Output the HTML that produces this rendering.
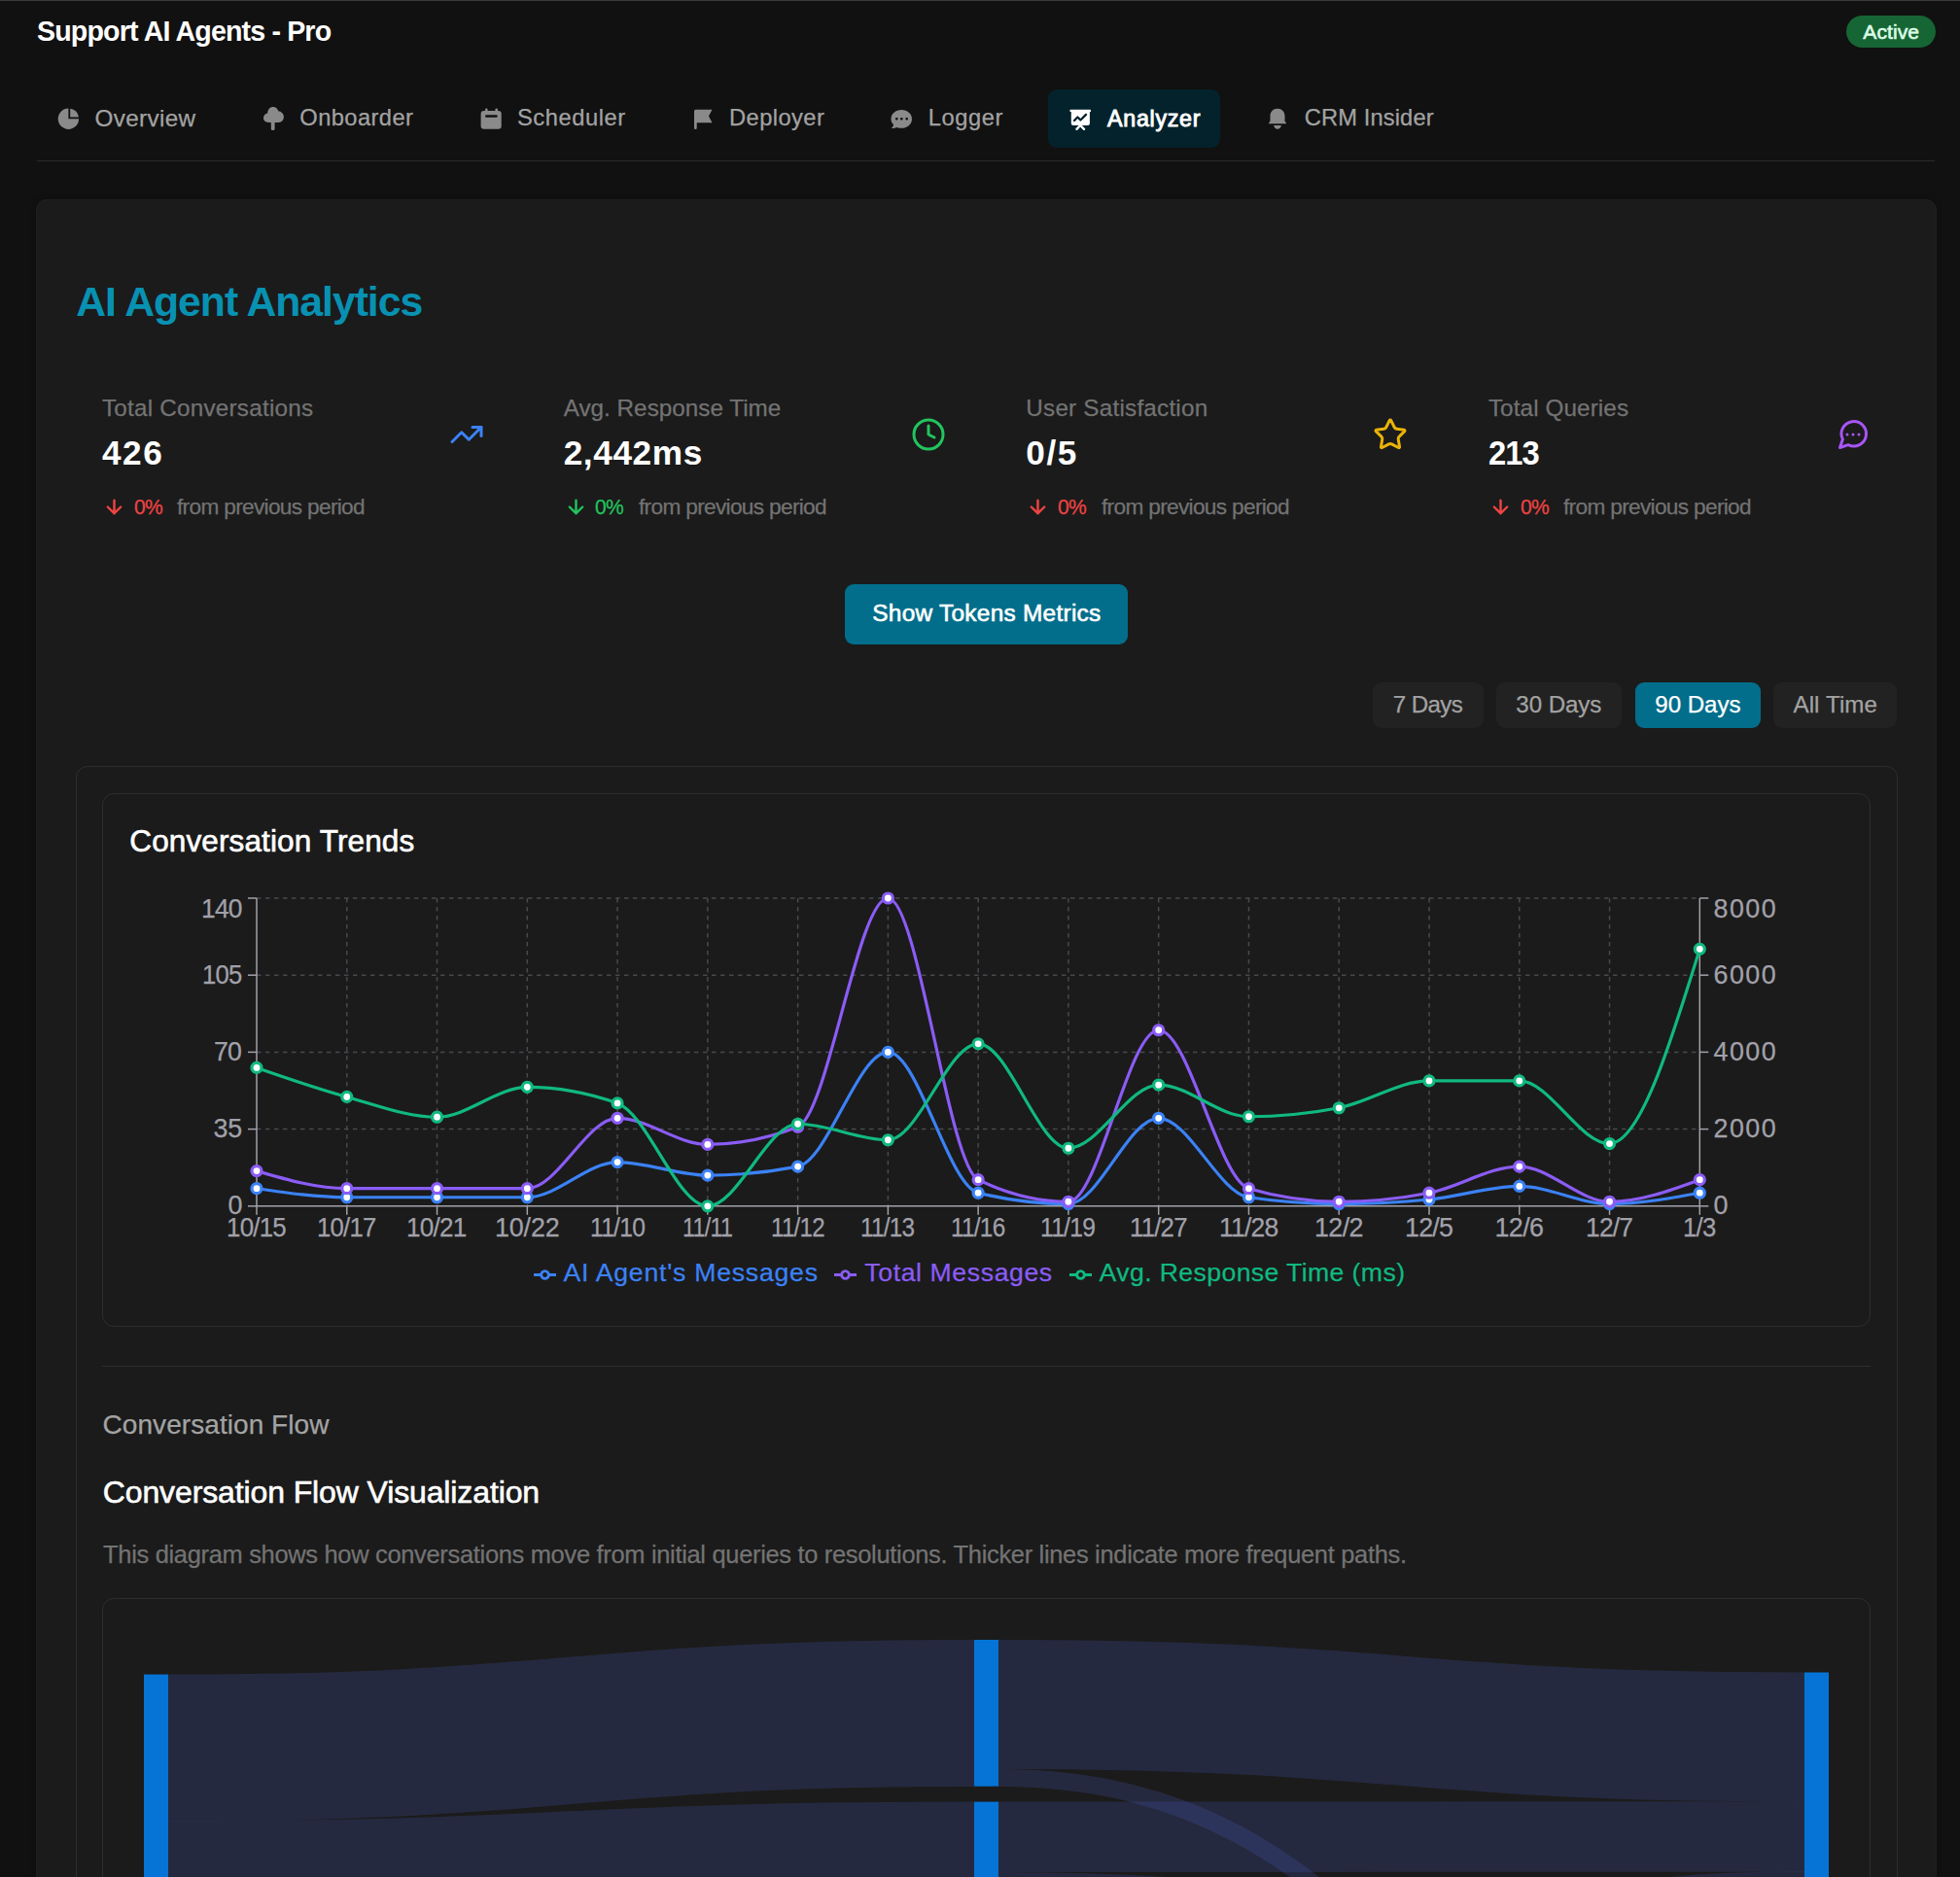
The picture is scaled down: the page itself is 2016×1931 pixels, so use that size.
<!DOCTYPE html>
<html><head><meta charset="utf-8"><style>
html,body{margin:0;padding:0;}
body{width:2016px;height:1931px;overflow:hidden;background:#111111;position:relative;font-family:"Liberation Sans", sans-serif;}
.t{position:absolute;white-space:nowrap;font-family:"Liberation Sans", sans-serif;}
svg{overflow:visible}
</style></head><body>
<div style="position:absolute;left:0.00px;top:0.00px;width:2016.00px;height:1.20px;background:#3a3a3a"></div>
<div class="t" style="left:38.00px;top:17.83px;font-size:28.78px;line-height:28.78px;letter-spacing:-0.863px;font-weight:bold;color:#ffffff;transform:scaleX(0.9942);transform-origin:0.00px 0;">Support AI Agents - Pro</div>
<div style="position:absolute;left:1899.00px;top:16.00px;width:92.00px;height:32.70px;background:#166534;border-radius:20px"></div>
<div class="t" style="left:1916.30px;top:21.96px;font-size:21.08px;line-height:21.08px;letter-spacing:0.060px;font-weight:normal;-webkit-text-stroke:0.6px #dcfce7;color:#dcfce7;">Active</div>
<div class="t" style="left:97.50px;top:109.85px;font-size:24.27px;line-height:24.27px;letter-spacing:0.339px;font-weight:normal;-webkit-text-stroke:0.25px #a3a3a3;color:#a3a3a3;">Overview</div>
<div class="t" style="left:308.30px;top:110.34px;font-size:23.69px;line-height:23.69px;letter-spacing:0.425px;font-weight:normal;-webkit-text-stroke:0.25px #a3a3a3;color:#a3a3a3;">Onboarder</div>
<div class="t" style="left:532.00px;top:110.34px;font-size:23.69px;line-height:23.69px;letter-spacing:0.562px;font-weight:normal;-webkit-text-stroke:0.25px #a3a3a3;color:#a3a3a3;">Scheduler</div>
<div class="t" style="left:750.00px;top:110.34px;font-size:23.69px;line-height:23.69px;letter-spacing:0.429px;font-weight:normal;-webkit-text-stroke:0.25px #a3a3a3;color:#a3a3a3;">Deployer</div>
<div class="t" style="left:954.70px;top:110.34px;font-size:23.69px;line-height:23.69px;letter-spacing:0.580px;font-weight:normal;-webkit-text-stroke:0.25px #a3a3a3;color:#a3a3a3;">Logger</div>
<div class="t" style="left:1341.70px;top:110.34px;font-size:23.69px;line-height:23.69px;letter-spacing:0.130px;font-weight:normal;-webkit-text-stroke:0.25px #a3a3a3;color:#a3a3a3;">CRM Insider</div>
<div style="position:absolute;left:1078.00px;top:91.80px;width:176.70px;height:60.00px;background:#04222c;border-radius:9px"></div>
<div class="t" style="left:1139.05px;top:110.51px;font-size:23.26px;line-height:23.26px;letter-spacing:0.714px;font-weight:normal;-webkit-text-stroke:0.9px #ffffff;color:#ffffff;">Analyzer</div>
<div style="position:absolute;left:38.00px;top:164.50px;width:1952.00px;height:1.50px;background:#2b2b2b"></div>
<svg style="position:absolute;left:58.00px;top:110.00px;" width="26.00" height="26.00" viewBox="0 0 26 26"><path d="M12.4 1.5 A10.7 10.7 0 1 0 23.1 12.2 L12.4 12.2 Z" fill="#8a8a8a"/><path d="M14.2 1.7 A10.7 10.7 0 0 1 23 10.4 L14.2 10.4 Z" fill="#8a8a8a"/></svg>
<svg style="position:absolute;left:268.00px;top:108.00px;" width="26.00" height="28.00" viewBox="0 0 26 28"><path d="M8.6 18 C4.5 18 3 15.6 3 13.3 C3 10.7 5 8.8 7.2 8.6 C7.3 4.7 9.7 2 12.9 2 C15.7 2 17.6 3.9 18.2 6.3 C21.3 6.6 23.9 9 23.9 12.3 C23.9 15.6 21.6 18 18.6 18 Z" fill="#8a8a8a"/><rect x="10.8" y="17" width="3.8" height="9" rx="1.5" fill="#8a8a8a"/></svg>
<svg style="position:absolute;left:492.00px;top:109.00px;" width="26.00" height="26.00" viewBox="0 0 26 26"><rect x="2.6" y="5" width="21.1" height="18.8" rx="3" fill="#8a8a8a"/><rect x="7" y="2.6" width="2.6" height="4" rx="1.2" fill="#8a8a8a"/><rect x="17.4" y="2.6" width="2.6" height="4" rx="1.2" fill="#8a8a8a"/><rect x="7" y="9.3" width="12.7" height="2.4" rx="1.2" fill="#111"/></svg>
<svg style="position:absolute;left:712.00px;top:110.00px;" width="24.00" height="25.00" viewBox="0 0 24 25"><path d="M2 4.5 C2 3.4 2.9 2.8 4 2.8 L20.5 2.8 L17 9.6 L20.5 16.2 L4.7 16.2 L4.7 21.8 C4.7 22.6 4.1 23 3.4 23 C2.6 23 2 22.6 2 21.8 Z" fill="#8a8a8a"/></svg>
<svg style="position:absolute;left:914.00px;top:110.00px;" width="26.00" height="25.00" viewBox="0 0 26 25"><path d="M13.2 3 C19.1 3 24 6.9 24 12.4 C24 17.8 19.1 21.8 13.2 21.8 C11.4 21.8 9.9 21.5 8.5 20.9 C6.6 21.9 4.7 22.1 2.8 21.9 C4 20.8 4.9 19.6 5.1 18.2 C3.4 16.7 2.5 14.6 2.5 12.4 C2.5 6.9 7.3 3 13.2 3 Z" fill="#8a8a8a"/><rect x="7" y="11" width="2.6" height="2.6" rx="1" fill="#111"/><rect x="12" y="11" width="2.6" height="2.6" rx="1" fill="#111"/><rect x="17.4" y="11" width="2.6" height="2.6" rx="1" fill="#111"/></svg>
<svg style="position:absolute;left:1098.00px;top:110.00px;" width="26.00" height="26.00" viewBox="0 0 26 26"><rect x="2.5" y="2.8" width="21.5" height="2.2" rx="0.6" fill="#fff"/><path d="M3.8 4.5 H22.9 V17 C22.9 18.1 22 19 20.9 19 H5.8 C4.7 19 3.8 18.1 3.8 17 Z" fill="#fff"/><path d="M7 14 L10.4 10.5 L13.4 13.5 L19 7.9" stroke="#04222c" stroke-width="2.3" fill="none" stroke-linecap="round" stroke-linejoin="round"/><path d="M9.5 22.8 L13.2 19 L17 22.8" stroke="#fff" stroke-width="2.4" fill="none" stroke-linecap="round"/></svg>
<svg style="position:absolute;left:1302.00px;top:109.00px;" width="24.00" height="26.00" viewBox="0 0 24 26"><path d="M12 2.7 C16.5 2.7 19.5 6 19.5 10.3 L19.5 15.4 L21.3 18.3 L2.7 18.3 L4.5 15.4 L4.5 10.3 C4.5 6 7.5 2.7 12 2.7 Z" fill="#8a8a8a"/><path d="M8.2 20 H15.9 C15.6 22.3 14 23.8 12 23.8 C10 23.8 8.5 22.3 8.2 20 Z" fill="#8a8a8a"/></svg>
<div style="position:absolute;left:38.00px;top:206.30px;width:1953.00px;height:1753.70px;background:#1b1b1b;border-radius:10px;box-shadow:0 0 0 1px #1f1f1f, 0 0 6px rgba(0,0,0,0.35)"></div>
<div class="t" style="left:78.20px;top:289.22px;font-size:42.73px;line-height:42.73px;letter-spacing:-1.012px;font-weight:bold;color:#0891b2;">AI Agent Analytics</div>
<div class="t" style="left:104.90px;top:408.15px;font-size:24.27px;line-height:24.27px;letter-spacing:0.228px;font-weight:normal;-webkit-text-stroke:0.25px #737373;color:#737373;">Total Conversations</div>
<div class="t" style="left:104.90px;top:448.02px;font-size:35.18px;line-height:35.18px;letter-spacing:1.638px;font-weight:bold;color:#ffffff;">426</div>
<div class="t" style="left:137.60px;top:510.54px;font-size:21.80px;line-height:21.80px;letter-spacing:-0.654px;font-weight:normal;-webkit-text-stroke:0.25px #ef4444;color:#ef4444;transform:scaleX(0.9635);transform-origin:0.00px 0;">0%</div>
<div class="t" style="left:182.40px;top:510.36px;font-size:22.97px;line-height:22.97px;letter-spacing:-0.689px;font-weight:normal;-webkit-text-stroke:0.25px #737373;color:#737373;transform:scaleX(0.9866);transform-origin:0.00px 0;">from previous period</div>
<svg style="position:absolute;left:105.90px;top:510.00px;" width="23.00" height="23.00" viewBox="0 0 24 24"><path d="M12 5v14M19 12l-7 7-7-7" stroke="#ef4444" stroke-width="2.5" fill="none" stroke-linecap="round" stroke-linejoin="round"/></svg>
<div class="t" style="left:579.70px;top:408.15px;font-size:24.27px;line-height:24.27px;letter-spacing:0.009px;font-weight:normal;-webkit-text-stroke:0.25px #737373;color:#737373;">Avg. Response Time</div>
<div class="t" style="left:579.70px;top:448.02px;font-size:35.18px;line-height:35.18px;letter-spacing:0.612px;font-weight:bold;color:#ffffff;">2,442ms</div>
<div class="t" style="left:612.40px;top:510.54px;font-size:21.80px;line-height:21.80px;letter-spacing:-0.654px;font-weight:normal;-webkit-text-stroke:0.25px #22c55e;color:#22c55e;transform:scaleX(0.9635);transform-origin:0.00px 0;">0%</div>
<div class="t" style="left:657.20px;top:510.36px;font-size:22.97px;line-height:22.97px;letter-spacing:-0.689px;font-weight:normal;-webkit-text-stroke:0.25px #737373;color:#737373;transform:scaleX(0.9866);transform-origin:0.00px 0;">from previous period</div>
<svg style="position:absolute;left:580.70px;top:510.00px;" width="23.00" height="23.00" viewBox="0 0 24 24"><path d="M12 5v14M19 12l-7 7-7-7" stroke="#22c55e" stroke-width="2.5" fill="none" stroke-linecap="round" stroke-linejoin="round"/></svg>
<div class="t" style="left:1055.30px;top:408.15px;font-size:24.27px;line-height:24.27px;letter-spacing:0.216px;font-weight:normal;-webkit-text-stroke:0.25px #737373;color:#737373;">User Satisfaction</div>
<div class="t" style="left:1055.30px;top:448.02px;font-size:35.18px;line-height:35.18px;letter-spacing:1.613px;font-weight:bold;color:#ffffff;">0/5</div>
<div class="t" style="left:1088.00px;top:510.54px;font-size:21.80px;line-height:21.80px;letter-spacing:-0.654px;font-weight:normal;-webkit-text-stroke:0.25px #ef4444;color:#ef4444;transform:scaleX(0.9635);transform-origin:0.00px 0;">0%</div>
<div class="t" style="left:1132.80px;top:510.36px;font-size:22.97px;line-height:22.97px;letter-spacing:-0.689px;font-weight:normal;-webkit-text-stroke:0.25px #737373;color:#737373;transform:scaleX(0.9866);transform-origin:0.00px 0;">from previous period</div>
<svg style="position:absolute;left:1056.30px;top:510.00px;" width="23.00" height="23.00" viewBox="0 0 24 24"><path d="M12 5v14M19 12l-7 7-7-7" stroke="#ef4444" stroke-width="2.5" fill="none" stroke-linecap="round" stroke-linejoin="round"/></svg>
<div class="t" style="left:1530.90px;top:408.15px;font-size:24.27px;line-height:24.27px;letter-spacing:0.102px;font-weight:normal;-webkit-text-stroke:0.25px #737373;color:#737373;">Total Queries</div>
<div class="t" style="left:1530.90px;top:448.02px;font-size:35.18px;line-height:35.18px;letter-spacing:-1.055px;font-weight:bold;color:#ffffff;transform:scaleX(0.9307);transform-origin:0.00px 0;">213</div>
<div class="t" style="left:1563.60px;top:510.54px;font-size:21.80px;line-height:21.80px;letter-spacing:-0.654px;font-weight:normal;-webkit-text-stroke:0.25px #ef4444;color:#ef4444;transform:scaleX(0.9635);transform-origin:0.00px 0;">0%</div>
<div class="t" style="left:1608.40px;top:510.36px;font-size:22.97px;line-height:22.97px;letter-spacing:-0.689px;font-weight:normal;-webkit-text-stroke:0.25px #737373;color:#737373;transform:scaleX(0.9866);transform-origin:0.00px 0;">from previous period</div>
<svg style="position:absolute;left:1531.90px;top:510.00px;" width="23.00" height="23.00" viewBox="0 0 24 24"><path d="M12 5v14M19 12l-7 7-7-7" stroke="#ef4444" stroke-width="2.5" fill="none" stroke-linecap="round" stroke-linejoin="round"/></svg>
<svg style="position:absolute;left:461.70px;top:428.50px;" width="36.00" height="36.00" viewBox="0 0 24 24"><g fill="none" stroke="#3b82f6" stroke-width="2" stroke-linecap="round" stroke-linejoin="round"><polyline points="22 7 13.5 15.5 8.5 10.5 2 17"/><polyline points="16 7 22 7 22 13"/></g></svg>
<svg style="position:absolute;left:937.00px;top:428.50px;" width="36.00" height="36.00" viewBox="0 0 24 24"><g fill="none" stroke="#22c55e" stroke-width="2" stroke-linecap="round" stroke-linejoin="round"><circle cx="12" cy="12" r="10"/><polyline points="12 6 12 12 16 14"/></g></svg>
<svg style="position:absolute;left:1412.30px;top:428.50px;" width="36.00" height="36.00" viewBox="0 0 24 24"><g fill="none" stroke="#eab308" stroke-width="2" stroke-linecap="round" stroke-linejoin="round"><path d="M11.525 2.295a.53.53 0 0 1 .95 0l2.31 4.679a2.123 2.123 0 0 0 1.595 1.16l5.166.756a.53.53 0 0 1 .294.904l-3.736 3.638a2.123 2.123 0 0 0-.611 1.878l.882 5.14a.53.53 0 0 1-.771.56l-4.618-2.428a2.122 2.122 0 0 0-1.973 0L6.396 21.01a.53.53 0 0 1-.77-.56l.881-5.139a2.122 2.122 0 0 0-.611-1.879L2.16 9.795a.53.53 0 0 1 .294-.906l5.165-.755a2.122 2.122 0 0 0 1.597-1.16z"/></g></svg>
<svg style="position:absolute;left:1887.60px;top:428.50px;" width="36.00" height="36.00" viewBox="0 0 24 24"><g fill="none" stroke="#a855f7" stroke-width="2" stroke-linecap="round" stroke-linejoin="round"><path d="m3 21 1.9-5.7a8.5 8.5 0 1 1 3.8 3.8z"/><path d="M8 12h.01"/><path d="M12 12h.01"/><path d="M16 12h.01"/></g></svg>
<div style="position:absolute;left:869.00px;top:601.00px;width:290.80px;height:61.90px;background:#026e8b;border-radius:9px"></div>
<div class="t" style="left:897.30px;top:619.32px;font-size:24.42px;line-height:24.42px;letter-spacing:0.268px;font-weight:normal;-webkit-text-stroke:0.6px #ffffff;color:#ffffff;">Show Tokens Metrics</div>
<div style="position:absolute;left:1412.00px;top:702.00px;width:113.70px;height:46.60px;background:#222222;border-radius:9px"></div>
<div class="t" style="left:1432.75px;top:713.27px;font-size:24.13px;line-height:24.13px;letter-spacing:-0.585px;font-weight:normal;-webkit-text-stroke:0.25px #a3a3a3;color:#a3a3a3;">7 Days</div>
<div style="position:absolute;left:1539.00px;top:702.00px;width:128.70px;height:46.60px;background:#222222;border-radius:9px"></div>
<div class="t" style="left:1559.35px;top:713.27px;font-size:24.13px;line-height:24.13px;letter-spacing:-0.083px;font-weight:normal;-webkit-text-stroke:0.25px #a3a3a3;color:#a3a3a3;">30 Days</div>
<div style="position:absolute;left:1682.00px;top:702.00px;width:128.90px;height:46.60px;background:#026e8b;border-radius:9px"></div>
<div class="t" style="left:1702.30px;top:713.27px;font-size:24.13px;line-height:24.13px;letter-spacing:-0.033px;font-weight:normal;-webkit-text-stroke:0.25px #ffffff;color:#ffffff;">90 Days</div>
<div style="position:absolute;left:1824.00px;top:702.00px;width:127.40px;height:46.60px;background:#222222;border-radius:9px"></div>
<div class="t" style="left:1844.45px;top:713.27px;font-size:24.13px;line-height:24.13px;letter-spacing:0.107px;font-weight:normal;-webkit-text-stroke:0.25px #a3a3a3;color:#a3a3a3;">All Time</div>
<div style="position:absolute;left:77.5px;top:788px;width:1874px;height:1300px;border:1.5px solid #2e2e2e;border-radius:12px;box-sizing:border-box"></div>
<div style="position:absolute;left:105px;top:816px;width:1819px;height:549px;border:1.5px solid #2e2e2e;border-radius:12px;box-sizing:border-box"></div>
<div class="t" style="left:133.30px;top:850.29px;font-size:31.54px;line-height:31.54px;letter-spacing:0.110px;font-weight:normal;-webkit-text-stroke:0.6px #ffffff;color:#ffffff;">Conversation Trends</div>
<svg style="position:absolute;left:0;top:0" width="2016" height="1400"><line x1="264.00" y1="1161.60" x2="1748.30" y2="1161.60" stroke="#48494f" stroke-width="1.5" stroke-dasharray="4.5 4.5"/><line x1="264.00" y1="1082.40" x2="1748.30" y2="1082.40" stroke="#48494f" stroke-width="1.5" stroke-dasharray="4.5 4.5"/><line x1="264.00" y1="1003.20" x2="1748.30" y2="1003.20" stroke="#48494f" stroke-width="1.5" stroke-dasharray="4.5 4.5"/><line x1="264.00" y1="924.00" x2="1748.30" y2="924.00" stroke="#48494f" stroke-width="1.5" stroke-dasharray="4.5 4.5"/><line x1="356.77" y1="924.00" x2="356.77" y2="1240.80" stroke="#48494f" stroke-width="1.5" stroke-dasharray="4.5 4.5"/><line x1="449.54" y1="924.00" x2="449.54" y2="1240.80" stroke="#48494f" stroke-width="1.5" stroke-dasharray="4.5 4.5"/><line x1="542.31" y1="924.00" x2="542.31" y2="1240.80" stroke="#48494f" stroke-width="1.5" stroke-dasharray="4.5 4.5"/><line x1="635.08" y1="924.00" x2="635.08" y2="1240.80" stroke="#48494f" stroke-width="1.5" stroke-dasharray="4.5 4.5"/><line x1="727.84" y1="924.00" x2="727.84" y2="1240.80" stroke="#48494f" stroke-width="1.5" stroke-dasharray="4.5 4.5"/><line x1="820.61" y1="924.00" x2="820.61" y2="1240.80" stroke="#48494f" stroke-width="1.5" stroke-dasharray="4.5 4.5"/><line x1="913.38" y1="924.00" x2="913.38" y2="1240.80" stroke="#48494f" stroke-width="1.5" stroke-dasharray="4.5 4.5"/><line x1="1006.15" y1="924.00" x2="1006.15" y2="1240.80" stroke="#48494f" stroke-width="1.5" stroke-dasharray="4.5 4.5"/><line x1="1098.92" y1="924.00" x2="1098.92" y2="1240.80" stroke="#48494f" stroke-width="1.5" stroke-dasharray="4.5 4.5"/><line x1="1191.69" y1="924.00" x2="1191.69" y2="1240.80" stroke="#48494f" stroke-width="1.5" stroke-dasharray="4.5 4.5"/><line x1="1284.46" y1="924.00" x2="1284.46" y2="1240.80" stroke="#48494f" stroke-width="1.5" stroke-dasharray="4.5 4.5"/><line x1="1377.22" y1="924.00" x2="1377.22" y2="1240.80" stroke="#48494f" stroke-width="1.5" stroke-dasharray="4.5 4.5"/><line x1="1469.99" y1="924.00" x2="1469.99" y2="1240.80" stroke="#48494f" stroke-width="1.5" stroke-dasharray="4.5 4.5"/><line x1="1562.76" y1="924.00" x2="1562.76" y2="1240.80" stroke="#48494f" stroke-width="1.5" stroke-dasharray="4.5 4.5"/><line x1="1655.53" y1="924.00" x2="1655.53" y2="1240.80" stroke="#48494f" stroke-width="1.5" stroke-dasharray="4.5 4.5"/><path d="M264.00 924.00 V1240.80 H1748.30 V924.00" stroke="#a1a1aa" stroke-width="1.5" fill="none"/><line x1="255.00" y1="1240.80" x2="264.00" y2="1240.80" stroke="#a1a1aa" stroke-width="1.5"/><line x1="1748.30" y1="1240.80" x2="1757.30" y2="1240.80" stroke="#a1a1aa" stroke-width="1.5"/><line x1="255.00" y1="1161.60" x2="264.00" y2="1161.60" stroke="#a1a1aa" stroke-width="1.5"/><line x1="1748.30" y1="1161.60" x2="1757.30" y2="1161.60" stroke="#a1a1aa" stroke-width="1.5"/><line x1="255.00" y1="1082.40" x2="264.00" y2="1082.40" stroke="#a1a1aa" stroke-width="1.5"/><line x1="1748.30" y1="1082.40" x2="1757.30" y2="1082.40" stroke="#a1a1aa" stroke-width="1.5"/><line x1="255.00" y1="1003.20" x2="264.00" y2="1003.20" stroke="#a1a1aa" stroke-width="1.5"/><line x1="1748.30" y1="1003.20" x2="1757.30" y2="1003.20" stroke="#a1a1aa" stroke-width="1.5"/><line x1="255.00" y1="924.00" x2="264.00" y2="924.00" stroke="#a1a1aa" stroke-width="1.5"/><line x1="1748.30" y1="924.00" x2="1757.30" y2="924.00" stroke="#a1a1aa" stroke-width="1.5"/><line x1="264.00" y1="1240.80" x2="264.00" y2="1249.80" stroke="#a1a1aa" stroke-width="1.5"/><line x1="356.77" y1="1240.80" x2="356.77" y2="1249.80" stroke="#a1a1aa" stroke-width="1.5"/><line x1="449.54" y1="1240.80" x2="449.54" y2="1249.80" stroke="#a1a1aa" stroke-width="1.5"/><line x1="542.31" y1="1240.80" x2="542.31" y2="1249.80" stroke="#a1a1aa" stroke-width="1.5"/><line x1="635.08" y1="1240.80" x2="635.08" y2="1249.80" stroke="#a1a1aa" stroke-width="1.5"/><line x1="727.84" y1="1240.80" x2="727.84" y2="1249.80" stroke="#a1a1aa" stroke-width="1.5"/><line x1="820.61" y1="1240.80" x2="820.61" y2="1249.80" stroke="#a1a1aa" stroke-width="1.5"/><line x1="913.38" y1="1240.80" x2="913.38" y2="1249.80" stroke="#a1a1aa" stroke-width="1.5"/><line x1="1006.15" y1="1240.80" x2="1006.15" y2="1249.80" stroke="#a1a1aa" stroke-width="1.5"/><line x1="1098.92" y1="1240.80" x2="1098.92" y2="1249.80" stroke="#a1a1aa" stroke-width="1.5"/><line x1="1191.69" y1="1240.80" x2="1191.69" y2="1249.80" stroke="#a1a1aa" stroke-width="1.5"/><line x1="1284.46" y1="1240.80" x2="1284.46" y2="1249.80" stroke="#a1a1aa" stroke-width="1.5"/><line x1="1377.22" y1="1240.80" x2="1377.22" y2="1249.80" stroke="#a1a1aa" stroke-width="1.5"/><line x1="1469.99" y1="1240.80" x2="1469.99" y2="1249.80" stroke="#a1a1aa" stroke-width="1.5"/><line x1="1562.76" y1="1240.80" x2="1562.76" y2="1249.80" stroke="#a1a1aa" stroke-width="1.5"/><line x1="1655.53" y1="1240.80" x2="1655.53" y2="1249.80" stroke="#a1a1aa" stroke-width="1.5"/><line x1="1748.30" y1="1240.80" x2="1748.30" y2="1249.80" stroke="#a1a1aa" stroke-width="1.5"/><path d="M264.00,1222.70C294.92,1227.22,325.85,1231.75,356.77,1231.75C387.69,1231.75,418.61,1231.75,449.54,1231.75C480.46,1231.75,511.38,1231.75,542.31,1231.75C573.23,1231.75,604.15,1195.54,635.08,1195.54C666.00,1195.54,696.92,1209.12,727.84,1209.12C758.77,1209.12,789.69,1206.10,820.61,1200.07C851.54,1194.03,882.46,1082.40,913.38,1082.40C944.30,1082.40,975.23,1219.68,1006.15,1227.22C1037.07,1234.77,1068.00,1238.54,1098.92,1238.54C1129.84,1238.54,1160.76,1150.29,1191.69,1150.29C1222.61,1150.29,1253.53,1227.22,1284.46,1231.75C1315.38,1236.27,1346.30,1238.54,1377.22,1238.54C1408.15,1238.54,1439.07,1237.03,1469.99,1234.01C1500.92,1230.99,1531.84,1220.43,1562.76,1220.43C1593.69,1220.43,1624.61,1238.54,1655.53,1238.54C1686.45,1238.54,1717.38,1232.88,1748.30,1227.22" stroke="#3b82f6" stroke-width="3.2" fill="none"/><circle cx="264.00" cy="1222.70" r="5.0" fill="#fff" stroke="#3b82f6" stroke-width="3.2"/><circle cx="356.77" cy="1231.75" r="5.0" fill="#fff" stroke="#3b82f6" stroke-width="3.2"/><circle cx="449.54" cy="1231.75" r="5.0" fill="#fff" stroke="#3b82f6" stroke-width="3.2"/><circle cx="542.31" cy="1231.75" r="5.0" fill="#fff" stroke="#3b82f6" stroke-width="3.2"/><circle cx="635.08" cy="1195.54" r="5.0" fill="#fff" stroke="#3b82f6" stroke-width="3.2"/><circle cx="727.84" cy="1209.12" r="5.0" fill="#fff" stroke="#3b82f6" stroke-width="3.2"/><circle cx="820.61" cy="1200.07" r="5.0" fill="#fff" stroke="#3b82f6" stroke-width="3.2"/><circle cx="913.38" cy="1082.40" r="5.0" fill="#fff" stroke="#3b82f6" stroke-width="3.2"/><circle cx="1006.15" cy="1227.22" r="5.0" fill="#fff" stroke="#3b82f6" stroke-width="3.2"/><circle cx="1098.92" cy="1238.54" r="5.0" fill="#fff" stroke="#3b82f6" stroke-width="3.2"/><circle cx="1191.69" cy="1150.29" r="5.0" fill="#fff" stroke="#3b82f6" stroke-width="3.2"/><circle cx="1284.46" cy="1231.75" r="5.0" fill="#fff" stroke="#3b82f6" stroke-width="3.2"/><circle cx="1377.22" cy="1238.54" r="5.0" fill="#fff" stroke="#3b82f6" stroke-width="3.2"/><circle cx="1469.99" cy="1234.01" r="5.0" fill="#fff" stroke="#3b82f6" stroke-width="3.2"/><circle cx="1562.76" cy="1220.43" r="5.0" fill="#fff" stroke="#3b82f6" stroke-width="3.2"/><circle cx="1655.53" cy="1238.54" r="5.0" fill="#fff" stroke="#3b82f6" stroke-width="3.2"/><circle cx="1748.30" cy="1227.22" r="5.0" fill="#fff" stroke="#3b82f6" stroke-width="3.2"/><path d="M264.00,1204.59C294.92,1213.65,325.85,1222.70,356.77,1222.70C387.69,1222.70,418.61,1222.70,449.54,1222.70C480.46,1222.70,511.38,1222.70,542.31,1222.70C573.23,1222.70,604.15,1150.29,635.08,1150.29C666.00,1150.29,696.92,1177.44,727.84,1177.44C758.77,1177.44,789.69,1171.41,820.61,1159.34C851.54,1147.27,882.46,924.00,913.38,924.00C944.30,924.00,975.23,1198.56,1006.15,1213.65C1037.07,1228.73,1068.00,1236.27,1098.92,1236.27C1129.84,1236.27,1160.76,1059.77,1191.69,1059.77C1222.61,1059.77,1253.53,1213.65,1284.46,1222.70C1315.38,1231.75,1346.30,1236.27,1377.22,1236.27C1408.15,1236.27,1439.07,1233.26,1469.99,1227.22C1500.92,1221.19,1531.84,1200.07,1562.76,1200.07C1593.69,1200.07,1624.61,1236.27,1655.53,1236.27C1686.45,1236.27,1717.38,1224.96,1748.30,1213.65" stroke="#8b5cf6" stroke-width="3.2" fill="none"/><circle cx="264.00" cy="1204.59" r="5.0" fill="#fff" stroke="#8b5cf6" stroke-width="3.2"/><circle cx="356.77" cy="1222.70" r="5.0" fill="#fff" stroke="#8b5cf6" stroke-width="3.2"/><circle cx="449.54" cy="1222.70" r="5.0" fill="#fff" stroke="#8b5cf6" stroke-width="3.2"/><circle cx="542.31" cy="1222.70" r="5.0" fill="#fff" stroke="#8b5cf6" stroke-width="3.2"/><circle cx="635.08" cy="1150.29" r="5.0" fill="#fff" stroke="#8b5cf6" stroke-width="3.2"/><circle cx="727.84" cy="1177.44" r="5.0" fill="#fff" stroke="#8b5cf6" stroke-width="3.2"/><circle cx="820.61" cy="1159.34" r="5.0" fill="#fff" stroke="#8b5cf6" stroke-width="3.2"/><circle cx="913.38" cy="924.00" r="5.0" fill="#fff" stroke="#8b5cf6" stroke-width="3.2"/><circle cx="1006.15" cy="1213.65" r="5.0" fill="#fff" stroke="#8b5cf6" stroke-width="3.2"/><circle cx="1098.92" cy="1236.27" r="5.0" fill="#fff" stroke="#8b5cf6" stroke-width="3.2"/><circle cx="1191.69" cy="1059.77" r="5.0" fill="#fff" stroke="#8b5cf6" stroke-width="3.2"/><circle cx="1284.46" cy="1222.70" r="5.0" fill="#fff" stroke="#8b5cf6" stroke-width="3.2"/><circle cx="1377.22" cy="1236.27" r="5.0" fill="#fff" stroke="#8b5cf6" stroke-width="3.2"/><circle cx="1469.99" cy="1227.22" r="5.0" fill="#fff" stroke="#8b5cf6" stroke-width="3.2"/><circle cx="1562.76" cy="1200.07" r="5.0" fill="#fff" stroke="#8b5cf6" stroke-width="3.2"/><circle cx="1655.53" cy="1236.27" r="5.0" fill="#fff" stroke="#8b5cf6" stroke-width="3.2"/><circle cx="1748.30" cy="1213.65" r="5.0" fill="#fff" stroke="#8b5cf6" stroke-width="3.2"/><path d="M264.00,1098.44C294.92,1109.20,325.85,1119.95,356.77,1128.42C387.69,1136.88,418.61,1149.21,449.54,1149.21C480.46,1149.21,511.38,1118.32,542.31,1118.32C573.23,1118.32,604.15,1123.86,635.08,1134.95C666.00,1146.04,696.92,1240.80,727.84,1240.80C758.77,1240.80,789.69,1156.25,820.61,1156.25C851.54,1156.25,882.46,1172.73,913.38,1172.73C944.30,1172.73,975.23,1073.81,1006.15,1073.81C1037.07,1073.81,1068.00,1181.24,1098.92,1181.24C1129.84,1181.24,1160.76,1116.18,1191.69,1116.18C1222.61,1116.18,1253.53,1148.77,1284.46,1148.77C1315.38,1148.77,1346.30,1145.77,1377.22,1139.78C1408.15,1133.79,1439.07,1111.90,1469.99,1111.90C1500.92,1111.90,1531.84,1111.90,1562.76,1111.90C1593.69,1111.90,1624.61,1176.53,1655.53,1176.53C1686.45,1176.53,1717.38,1076.44,1748.30,976.35" stroke="#10b981" stroke-width="3.2" fill="none"/><circle cx="264.00" cy="1098.44" r="5.0" fill="#fff" stroke="#10b981" stroke-width="3.2"/><circle cx="356.77" cy="1128.42" r="5.0" fill="#fff" stroke="#10b981" stroke-width="3.2"/><circle cx="449.54" cy="1149.21" r="5.0" fill="#fff" stroke="#10b981" stroke-width="3.2"/><circle cx="542.31" cy="1118.32" r="5.0" fill="#fff" stroke="#10b981" stroke-width="3.2"/><circle cx="635.08" cy="1134.95" r="5.0" fill="#fff" stroke="#10b981" stroke-width="3.2"/><circle cx="727.84" cy="1240.80" r="5.0" fill="#fff" stroke="#10b981" stroke-width="3.2"/><circle cx="820.61" cy="1156.25" r="5.0" fill="#fff" stroke="#10b981" stroke-width="3.2"/><circle cx="913.38" cy="1172.73" r="5.0" fill="#fff" stroke="#10b981" stroke-width="3.2"/><circle cx="1006.15" cy="1073.81" r="5.0" fill="#fff" stroke="#10b981" stroke-width="3.2"/><circle cx="1098.92" cy="1181.24" r="5.0" fill="#fff" stroke="#10b981" stroke-width="3.2"/><circle cx="1191.69" cy="1116.18" r="5.0" fill="#fff" stroke="#10b981" stroke-width="3.2"/><circle cx="1284.46" cy="1148.77" r="5.0" fill="#fff" stroke="#10b981" stroke-width="3.2"/><circle cx="1377.22" cy="1139.78" r="5.0" fill="#fff" stroke="#10b981" stroke-width="3.2"/><circle cx="1469.99" cy="1111.90" r="5.0" fill="#fff" stroke="#10b981" stroke-width="3.2"/><circle cx="1562.76" cy="1111.90" r="5.0" fill="#fff" stroke="#10b981" stroke-width="3.2"/><circle cx="1655.53" cy="1176.53" r="5.0" fill="#fff" stroke="#10b981" stroke-width="3.2"/><circle cx="1748.30" cy="976.35" r="5.0" fill="#fff" stroke="#10b981" stroke-width="3.2"/></svg>
<div class="t" style="left:233.15px;top:1249.73px;font-size:26.89px;line-height:26.89px;letter-spacing:-0.807px;font-weight:normal;-webkit-text-stroke:0.25px #a1a1aa;color:#a1a1aa;transform:scaleX(0.9637);transform-origin:0.00px 0;">10/15</div>
<div class="t" style="left:326.17px;top:1249.73px;font-size:26.89px;line-height:26.89px;letter-spacing:-0.807px;font-weight:normal;-webkit-text-stroke:0.25px #a1a1aa;color:#a1a1aa;transform:scaleX(0.9559);transform-origin:0.00px 0;">10/17</div>
<div class="t" style="left:418.44px;top:1249.73px;font-size:26.89px;line-height:26.89px;letter-spacing:-0.807px;font-weight:normal;-webkit-text-stroke:0.25px #a1a1aa;color:#a1a1aa;transform:scaleX(0.9715);transform-origin:0.00px 0;">10/21</div>
<div class="t" style="left:508.91px;top:1249.73px;font-size:26.89px;line-height:26.89px;letter-spacing:-0.113px;font-weight:normal;-webkit-text-stroke:0.25px #a1a1aa;color:#a1a1aa;">10/22</div>
<div class="t" style="left:606.62px;top:1249.73px;font-size:26.89px;line-height:26.89px;letter-spacing:-0.807px;font-weight:normal;-webkit-text-stroke:0.25px #a1a1aa;color:#a1a1aa;transform:scaleX(0.9174);transform-origin:0.00px 0;">11/10</div>
<div class="t" style="left:701.94px;top:1249.73px;font-size:26.89px;line-height:26.89px;letter-spacing:-0.807px;font-weight:normal;-webkit-text-stroke:0.25px #a1a1aa;color:#a1a1aa;transform:scaleX(0.8630);transform-origin:0.00px 0;">11/11</div>
<div class="t" style="left:792.81px;top:1249.73px;font-size:26.89px;line-height:26.89px;letter-spacing:-0.807px;font-weight:normal;-webkit-text-stroke:0.25px #a1a1aa;color:#a1a1aa;transform:scaleX(0.8964);transform-origin:0.00px 0;">11/12</div>
<div class="t" style="left:885.38px;top:1249.73px;font-size:26.89px;line-height:26.89px;letter-spacing:-0.807px;font-weight:normal;-webkit-text-stroke:0.25px #a1a1aa;color:#a1a1aa;transform:scaleX(0.9029);transform-origin:0.00px 0;">11/13</div>
<div class="t" style="left:978.05px;top:1249.73px;font-size:26.89px;line-height:26.89px;letter-spacing:-0.807px;font-weight:normal;-webkit-text-stroke:0.25px #a1a1aa;color:#a1a1aa;transform:scaleX(0.9061);transform-origin:0.00px 0;">11/16</div>
<div class="t" style="left:1070.47px;top:1249.73px;font-size:26.89px;line-height:26.89px;letter-spacing:-0.807px;font-weight:normal;-webkit-text-stroke:0.25px #a1a1aa;color:#a1a1aa;transform:scaleX(0.9174);transform-origin:0.00px 0;">11/19</div>
<div class="t" style="left:1161.94px;top:1249.73px;font-size:26.89px;line-height:26.89px;letter-spacing:-0.807px;font-weight:normal;-webkit-text-stroke:0.25px #a1a1aa;color:#a1a1aa;transform:scaleX(0.9593);transform-origin:0.00px 0;">11/27</div>
<div class="t" style="left:1253.86px;top:1249.73px;font-size:26.89px;line-height:26.89px;letter-spacing:-0.807px;font-weight:normal;-webkit-text-stroke:0.25px #a1a1aa;color:#a1a1aa;transform:scaleX(0.9867);transform-origin:0.00px 0;">11/28</div>
<div class="t" style="left:1351.97px;top:1249.73px;font-size:26.89px;line-height:26.89px;letter-spacing:-0.583px;font-weight:normal;-webkit-text-stroke:0.25px #a1a1aa;color:#a1a1aa;">12/2</div>
<div class="t" style="left:1445.04px;top:1249.73px;font-size:26.89px;line-height:26.89px;letter-spacing:-0.783px;font-weight:normal;-webkit-text-stroke:0.25px #a1a1aa;color:#a1a1aa;">12/5</div>
<div class="t" style="left:1537.51px;top:1249.73px;font-size:26.89px;line-height:26.89px;letter-spacing:-0.583px;font-weight:normal;-webkit-text-stroke:0.25px #a1a1aa;color:#a1a1aa;">12/6</div>
<div class="t" style="left:1631.08px;top:1249.73px;font-size:26.89px;line-height:26.89px;letter-spacing:-0.807px;font-weight:normal;-webkit-text-stroke:0.25px #a1a1aa;color:#a1a1aa;transform:scaleX(0.9813);transform-origin:0.00px 0;">12/7</div>
<div class="t" style="left:1731.20px;top:1249.73px;font-size:26.89px;line-height:26.89px;letter-spacing:-0.807px;font-weight:normal;-webkit-text-stroke:0.25px #a1a1aa;color:#a1a1aa;transform:scaleX(0.9563);transform-origin:0.00px 0;">1/3</div>
<div class="t" style="left:234.50px;top:1227.23px;font-size:26.89px;line-height:26.89px;letter-spacing:0.000px;font-weight:normal;-webkit-text-stroke:0.25px #a1a1aa;color:#a1a1aa;">0</div>
<div class="t" style="left:1762.60px;top:1227.23px;font-size:26.89px;line-height:26.89px;letter-spacing:0.000px;font-weight:normal;-webkit-text-stroke:0.25px #a1a1aa;color:#a1a1aa;">0</div>
<div class="t" style="left:219.50px;top:1148.03px;font-size:26.89px;line-height:26.89px;letter-spacing:-0.075px;font-weight:normal;-webkit-text-stroke:0.25px #a1a1aa;color:#a1a1aa;">35</div>
<div class="t" style="left:1762.60px;top:1148.03px;font-size:26.89px;line-height:26.89px;letter-spacing:1.417px;font-weight:normal;-webkit-text-stroke:0.25px #a1a1aa;color:#a1a1aa;">2000</div>
<div class="t" style="left:220.40px;top:1068.83px;font-size:26.89px;line-height:26.89px;letter-spacing:-0.807px;font-weight:normal;-webkit-text-stroke:0.25px #a1a1aa;color:#a1a1aa;transform:scaleX(0.9942);transform-origin:0.00px 0;">70</div>
<div class="t" style="left:1762.60px;top:1068.83px;font-size:26.89px;line-height:26.89px;letter-spacing:1.417px;font-weight:normal;-webkit-text-stroke:0.25px #a1a1aa;color:#a1a1aa;">4000</div>
<div class="t" style="left:208.00px;top:989.63px;font-size:26.89px;line-height:26.89px;letter-spacing:-0.807px;font-weight:normal;-webkit-text-stroke:0.25px #a1a1aa;color:#a1a1aa;transform:scaleX(0.9547);transform-origin:0.00px 0;">105</div>
<div class="t" style="left:1762.60px;top:989.63px;font-size:26.89px;line-height:26.89px;letter-spacing:1.417px;font-weight:normal;-webkit-text-stroke:0.25px #a1a1aa;color:#a1a1aa;">6000</div>
<div class="t" style="left:206.80px;top:922.03px;font-size:26.89px;line-height:26.89px;letter-spacing:-0.807px;font-weight:normal;-webkit-text-stroke:0.25px #a1a1aa;color:#a1a1aa;transform:scaleX(0.9824);transform-origin:0.00px 0;">140</div>
<div class="t" style="left:1762.60px;top:922.03px;font-size:26.89px;line-height:26.89px;letter-spacing:1.417px;font-weight:normal;-webkit-text-stroke:0.25px #a1a1aa;color:#a1a1aa;">8000</div>
<svg style="position:absolute;left:548.90px;top:1301.40px;" width="23.00" height="21.00" viewBox="0 6 32 20"><path d="M0,16h10.67A5.33,5.33,0,1,1,21.33,16H32M21.33,16A5.33,5.33,0,1,1,10.67,16" stroke="#3b82f6" stroke-width="4" fill="none"/></svg>
<div class="t" style="left:579.40px;top:1295.68px;font-size:26.60px;line-height:26.60px;letter-spacing:0.781px;font-weight:normal;-webkit-text-stroke:0.25px #3b82f6;color:#3b82f6;">AI Agent's Messages</div>
<svg style="position:absolute;left:858.00px;top:1301.40px;" width="23.00" height="21.00" viewBox="0 6 32 20"><path d="M0,16h10.67A5.33,5.33,0,1,1,21.33,16H32M21.33,16A5.33,5.33,0,1,1,10.67,16" stroke="#8b5cf6" stroke-width="4" fill="none"/></svg>
<div class="t" style="left:889.30px;top:1295.68px;font-size:26.60px;line-height:26.60px;letter-spacing:0.623px;font-weight:normal;-webkit-text-stroke:0.25px #8b5cf6;color:#8b5cf6;">Total Messages</div>
<svg style="position:absolute;left:1100.00px;top:1301.40px;" width="23.00" height="21.00" viewBox="0 6 32 20"><path d="M0,16h10.67A5.33,5.33,0,1,1,21.33,16H32M21.33,16A5.33,5.33,0,1,1,10.67,16" stroke="#10b981" stroke-width="4" fill="none"/></svg>
<div class="t" style="left:1130.60px;top:1295.68px;font-size:26.60px;line-height:26.60px;letter-spacing:0.407px;font-weight:normal;-webkit-text-stroke:0.25px #10b981;color:#10b981;">Avg. Response Time (ms)</div>
<div style="position:absolute;left:105.00px;top:1404.60px;width:1819.00px;height:1.50px;background:#2e2e2e"></div>
<div class="t" style="left:105.50px;top:1451.95px;font-size:28.05px;line-height:28.05px;letter-spacing:0.044px;font-weight:normal;-webkit-text-stroke:0.25px #a3a3a3;color:#a3a3a3;">Conversation Flow</div>
<div class="t" style="left:105.80px;top:1518.93px;font-size:31.98px;line-height:31.98px;letter-spacing:-0.107px;font-weight:normal;-webkit-text-stroke:0.6px #ffffff;color:#ffffff;">Conversation Flow Visualization</div>
<div class="t" style="left:106.10px;top:1586.76px;font-size:25.44px;line-height:25.44px;letter-spacing:-0.307px;font-weight:normal;-webkit-text-stroke:0.25px #737373;color:#737373;">This diagram shows how conversations move from initial queries to resolutions. Thicker lines indicate more frequent paths.</div>
<div style="position:absolute;left:105px;top:1644px;width:1819px;height:600px;border:1.5px solid #2e2e2e;border-radius:12px;box-sizing:border-box"></div>
<svg style="position:absolute;left:0;top:1600px" width="2016" height="331" viewBox="0 1600 2016 331"><path d="M173.00,1798.10C587.50,1798.10 587.50,1762.50 1002.00,1762.50" stroke="rgba(82,102,212,0.2)" stroke-width="151.00" fill="none"/><path d="M173.00,2023.30C587.50,2023.30 587.50,2003.60 1002.00,2003.60" stroke="rgba(82,102,212,0.2)" stroke-width="300.00" fill="none"/><path d="M1027.00,1753.50C1441.50,1753.50 1441.50,1787.00 1856.00,1787.00" stroke="rgba(82,102,212,0.2)" stroke-width="133.00" fill="none"/><path d="M1027.00,1829.00C1441.50,1829.00 1441.50,2200.00 1856.00,2200.00" stroke="rgba(82,102,212,0.2)" stroke-width="18.00" fill="none"/><path d="M1027.00,1889.80C1441.50,1889.80 1441.50,1889.40 1856.00,1889.40" stroke="rgba(82,102,212,0.2)" stroke-width="72.40" fill="none"/><path d="M1027.00,1976.00C1441.50,1976.00 1441.50,2046.00 1856.00,2046.00" stroke="rgba(82,102,212,0.2)" stroke-width="100.00" fill="none"/><path d="M1027.00,2116.00C1441.50,2116.00 1441.50,1974.90 1856.00,1974.90" stroke="rgba(82,102,212,0.2)" stroke-width="100.00" fill="none"/><rect x="148.00" y="1722.60" width="25.00" height="377.40" fill="#0574d6"/><rect x="1002.00" y="1687.00" width="25.00" height="150.70" fill="#0574d6"/><rect x="1002.00" y="1853.60" width="25.00" height="246.40" fill="#0574d6"/><rect x="1856.00" y="1720.50" width="25.00" height="379.50" fill="#0574d6"/></svg>
</body></html>
